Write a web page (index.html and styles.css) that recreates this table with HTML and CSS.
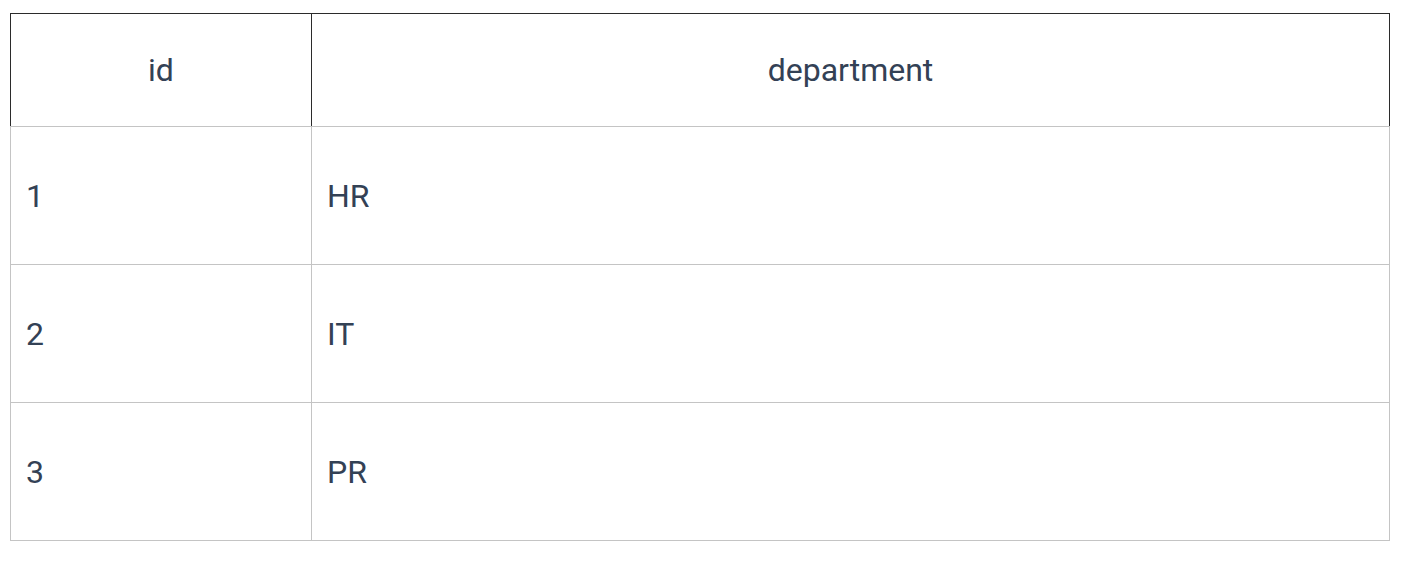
FILE: index.html
```html
<!DOCTYPE html>
<html>
<head>
<meta charset="utf-8">
<link rel="stylesheet" href="styles.css">
</head>
<body>
<div class="wrap">
  <table class="grid">
    <colgroup>
      <col class="col-id">
      <col class="col-dept">
    </colgroup>
    <thead>
      <tr class="head-row">
        <th>id</th>
        <th>department</th>
      </tr>
    </thead>
    <tbody>
      <tr class="body-row"><td>1</td><td>HR</td></tr>
      <tr class="body-row"><td>2</td><td>IT</td></tr>
      <tr class="body-row"><td>3</td><td>PR</td></tr>
    </tbody>
  </table>
</div>
</body>
</html>
```

FILE: styles.css
```css
html, body {
  margin: 0;
  padding: 0;
  background: #ffffff;
}

.wrap {
  padding: 13px 0 0 10px;
}

.grid {
  width: 1380px;
  border-collapse: collapse;
  table-layout: fixed;
  font-family: Roboto, "Noto Sans", sans-serif;
  font-size: 32px;
  color: #334155;
}

.col-id {
  width: 301px;
}

.grid th {
  font-weight: 400;
  text-align: center;
  height: 112px;
  padding: 0 15px;
  border-top: 1px solid #2b2b2b;
  border-left: 1px solid #2b2b2b;
  border-right: 1px solid #2b2b2b;
  border-bottom: 1px solid #c4c4c4;
}

.grid td {
  text-align: left;
  height: 137px;
  padding: 0 15px;
  border: 1px solid #c4c4c4;
}
```
